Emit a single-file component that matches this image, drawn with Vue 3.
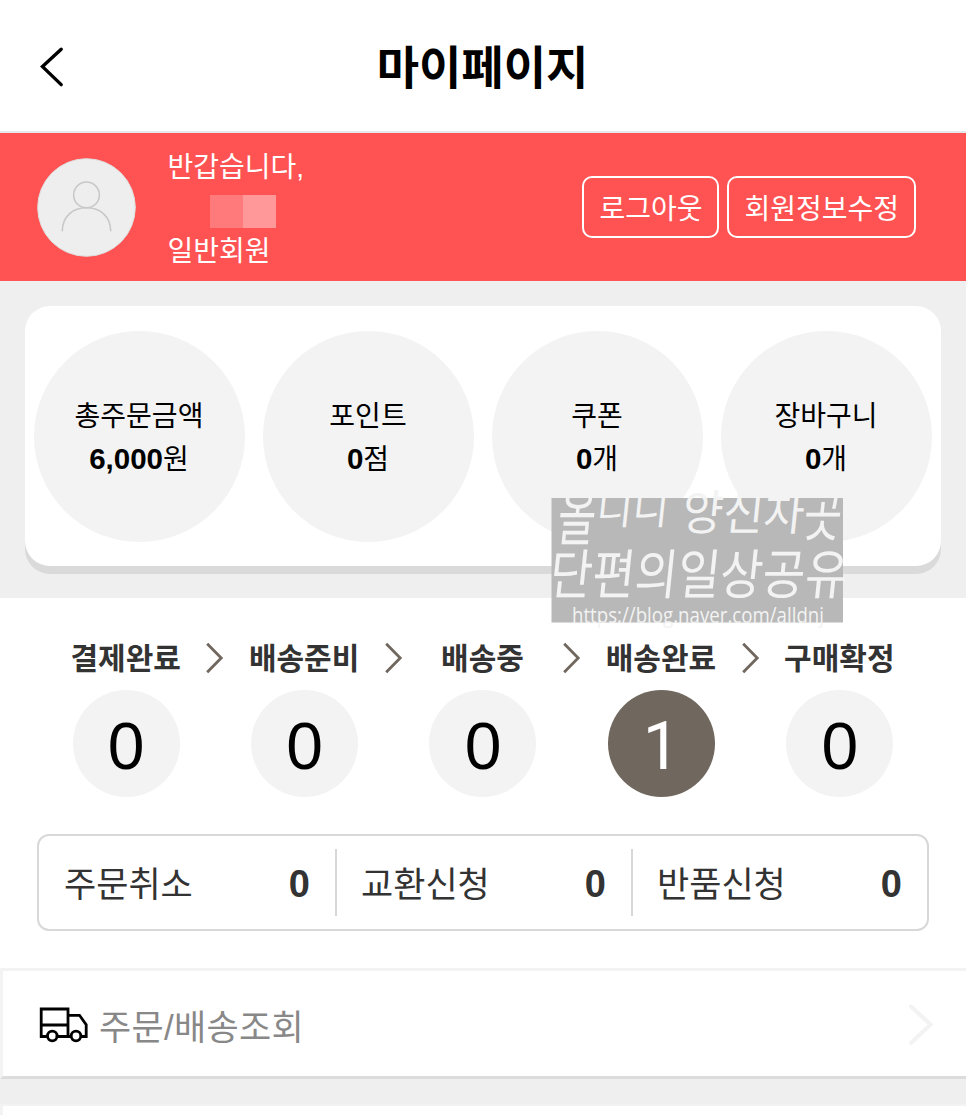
<template>
  <div class="mypage">
    <header class="header">
      <svg class="back" viewBox="0 0 28 44" @click="goBack">
        <path d="M22.2 5.2 L3.5 22.6 L22.2 40.6" />
      </svg>
      <h1>마이페이지</h1>
    </header>

    <section class="profile">
      <svg class="avatar" viewBox="0 0 100 100">
        <circle class="avatar-bg" cx="50" cy="50" r="49.3" />
        <circle cx="50" cy="37.3" r="13" />
        <path d="M25.5 73.5 C26 59 36 50.3 50 50.3 C64 50.3 74 59 74.5 73.5" />
      </svg>
      <div class="greeting">
        <p>반갑습니다,</p>
        <p class="masked"><i></i><i></i></p>
        <p>일반회원</p>
      </div>
      <div class="buttons">
        <button type="button">로그아웃</button>
        <button type="button">회원정보수정</button>
      </div>
    </section>

    <section class="summary">
      <div class="summary-card">
        <div v-for="item in summary" :key="item.label" class="summary-item">
          <span>{{ item.label }}</span>
          <span><b>{{ item.value }}</b>{{ item.unit }}</span>
        </div>
      </div>
      <svg class="watermark" viewBox="0 0 300 160">
        <rect x="3.5" y="18" width="291.5" height="124.5" />
        <g transform="skewX(-6)">
          <text x="14" y="60" font-size="62" textLength="38" lengthAdjust="spacingAndGlyphs">올</text>
          <text x="52" y="44" font-size="42" textLength="72" lengthAdjust="spacingAndGlyphs">디니</text>
          <text x="138" y="50" font-size="48" textLength="122" lengthAdjust="spacingAndGlyphs">양신차</text>
          <text x="260" y="56" font-size="58" textLength="38" lengthAdjust="spacingAndGlyphs">곳</text>
          <text x="12" y="114" font-size="54" textLength="298" lengthAdjust="spacingAndGlyphs">단편의일상공유</text>
        </g>
        <text class="url" x="24" y="143" font-size="22" textLength="252" lengthAdjust="spacingAndGlyphs">https://blog.naver.com/alldnj</text>
      </svg>
    </section>

    <section class="orders">
      <div class="steps">
        <div
          v-for="(step, index) in steps"
          :key="step.label"
          class="step"
          :class="{ 'step-active': step.count > 0 }"
        >
          <strong>{{ step.label }}</strong>
          <span class="count">{{ step.count }}</span>
          <svg v-if="index < steps.length - 1" class="next" viewBox="0 0 18 32">
            <path d="M1.2 1.8 L15.2 16 L1.2 30.2" />
          </svg>
        </div>
      </div>
      <div class="claims">
        <div v-for="claim in claims" :key="claim.label" class="claim">
          <span>{{ claim.label }}</span>
          <b>{{ claim.count }}</b>
        </div>
      </div>
    </section>

    <a class="menu">
      <svg class="truck" viewBox="0 0 50 38">
        <path d="M7.5 30.5 H2.2 V3 H29 V30.5 H18 M2.2 19 H29 M29 9.3 H40.5 L47.2 18.8 V30.5 H42.5 M29 30.5 H31.5" />
        <circle cx="13.3" cy="30" r="4.8" />
        <circle cx="37" cy="30" r="4.8" />
      </svg>
      <span>주문/배송조회</span>
      <svg class="more" viewBox="0 0 26 42">
        <path d="M3 2.5 L22.5 20.5 L3 39" />
      </svg>
    </a>
    <div class="menu-next"></div>
  </div>
</template>

<script setup>
import { ref } from "vue";

const summary = ref([
  { label: "총주문금액", value: "6,000", unit: "원" },
  { label: "포인트", value: "0", unit: "점" },
  { label: "쿠폰", value: "0", unit: "개" },
  { label: "장바구니", value: "0", unit: "개" },
]);

const steps = ref([
  { label: "결제완료", count: 0 },
  { label: "배송준비", count: 0 },
  { label: "배송중", count: 0 },
  { label: "배송완료", count: 1 },
  { label: "구매확정", count: 0 },
]);

const claims = ref([
  { label: "주문취소", count: 0 },
  { label: "교환신청", count: 0 },
  { label: "반품신청", count: 0 },
]);

const goBack = () => {
  window.history.back();
};
</script>

<style>
body {
  margin: 0;
  background: #efefef;
}
</style>

<style scoped>
.mypage {
  height: 1115px;
  overflow: hidden;
  display: flex;
  flex-direction: column;
  background: #efefef;
  color: #000;
  font-family: "Liberation Sans", "Noto Sans CJK KR", sans-serif;
  font-size: 28px;
}

.mypage * {
  box-sizing: border-box;
}

svg {
  fill: none;
  stroke-linecap: round;
  flex-shrink: 0;
}

.header {
  height: 133px;
  flex-shrink: 0;
  display: grid;
  grid-template-columns: 100px 1fr 100px;
  align-items: center;
  background: #fff;
  border-bottom: 2px solid #e6e8e9;
}

.back {
  width: 28px;
  height: 44px;
  margin-left: 39px;
  stroke: #000;
  stroke-width: 3.4;
}

h1 {
  margin: 0;
  padding: 0 1px 3px 0;
  text-align: center;
  font-size: 46px;
  font-weight: 700;
}

.profile {
  height: 148px;
  flex-shrink: 0;
  display: flex;
  align-items: center;
  padding: 0 50px 0 37px;
  background: #ff5353;
  color: #fff;
}

.avatar {
  width: 99px;
  height: 99px;
  stroke: #c8c8c8;
  stroke-width: 1.6;
}

.avatar-bg {
  fill: #eee;
  stroke: #dedede;
  stroke-width: 1;
}

.greeting {
  margin-left: 31.5px;
  padding-top: 5px;
}

.greeting p {
  height: 42px;
  margin: 0;
  line-height: 42px;
}

.masked {
  display: flex;
  align-items: center;
  padding: 3px 0 0 42px;
}

.masked i {
  width: 33px;
  height: 33px;
  background: #ff7a7a;
}

.masked i + i {
  background: #ff9999;
}

.buttons {
  margin-left: auto;
  display: flex;
  gap: 8px;
}

.buttons button {
  height: 62px;
  padding: 0 15px;
  border: 2px solid #fff;
  border-radius: 10px;
  background: transparent;
  color: #fff;
  font: inherit;
}

.summary {
  position: relative;
  height: 317px;
  flex-shrink: 0;
  padding: 25px 25px 0;
}

.summary-card {
  height: 260px;
  display: grid;
  grid-template-columns: repeat(4, 1fr);
  place-items: center;
  border-radius: 25px;
  background: #fff;
  box-shadow: 0 8px 0 #dadada;
}

.summary-item {
  width: 211px;
  height: 211px;
  display: flex;
  flex-direction: column;
  align-items: center;
  justify-content: center;
  padding: 4px 1px 0 0;
  border-radius: 50%;
  background: #f3f3f3;
  line-height: 42px;
}

.summary-item b {
  font-size: 29.5px;
}

.watermark {
  position: absolute;
  left: 548px;
  top: 199px;
  width: 300px;
  height: 160px;
  overflow: visible;
  font-family: "Noto Sans CJK KR", sans-serif;
  font-weight: 400;
}

.watermark rect {
  fill: #b8b8b8;
}

.watermark text {
  fill: #f3f3f3;
}

.watermark .url {
  font-family: "Open Sans", sans-serif;
}

.orders {
  height: 370px;
  flex-shrink: 0;
  padding: 39px 37px 0;
  background: #fff;
}

.steps {
  display: grid;
  grid-template-columns: repeat(5, 1fr);
}

.step {
  position: relative;
  display: flex;
  flex-direction: column;
  align-items: center;
}

.step strong {
  height: 53px;
  padding-right: 1px;
  line-height: 44px;
  font-size: 30px;
  color: #333;
}

.count {
  width: 107px;
  height: 107px;
  border-radius: 50%;
  background: #f3f3f3;
  text-align: center;
  font-size: 66px;
  line-height: 113px;
}

.step-active .count {
  background: #70675e;
  color: #fff;
  font-family: Roboto, sans-serif;
}

.next {
  position: absolute;
  right: -9px;
  top: 5px;
  width: 18px;
  height: 32px;
  stroke: #70675e;
  stroke-width: 2.8;
  stroke-linecap: butt;
}

.claims {
  height: 97px;
  margin-top: 37px;
  display: grid;
  grid-template-columns: repeat(3, 1fr);
  align-items: center;
  border: 2px solid #d8d8d8;
  border-radius: 12px;
  color: #333;
  font-size: 35px;
}

.claim {
  height: 67px;
  display: flex;
  align-items: center;
  justify-content: space-between;
  padding: 0 25px;
}

.claim span {
  padding-bottom: 3px;
}

.claim b {
  padding-top: 3px;
  font-size: 38px;
}

.claim + .claim {
  border-left: 2px solid #d8d8d8;
  padding-left: 24px;
}

.menu {
  height: 111px;
  flex-shrink: 0;
  display: flex;
  align-items: center;
  padding: 2px 32px 0 36px;
  background: #fff;
  border: 3px solid #f3f3f3;
  border-right: 0;
  border-bottom-color: #dcdcdc;
  color: #888;
  font-size: 35px;
}

.menu span {
  padding-bottom: 1px;
  letter-spacing: 0.3px;
}

.truck {
  width: 50px;
  height: 38px;
  margin-right: 10px;
  stroke: #000;
  stroke-width: 2.8;
}

.more {
  width: 26px;
  height: 42px;
  margin-left: auto;
  stroke: #f3f3f3;
  stroke-width: 4;
}

.menu-next {
  height: 12px;
  flex-shrink: 0;
  margin-top: 25px;
  background: #fff;
  border-top: 2px solid #f3f3f3;
  border-left: 3px solid #f3f3f3;
}
</style>
